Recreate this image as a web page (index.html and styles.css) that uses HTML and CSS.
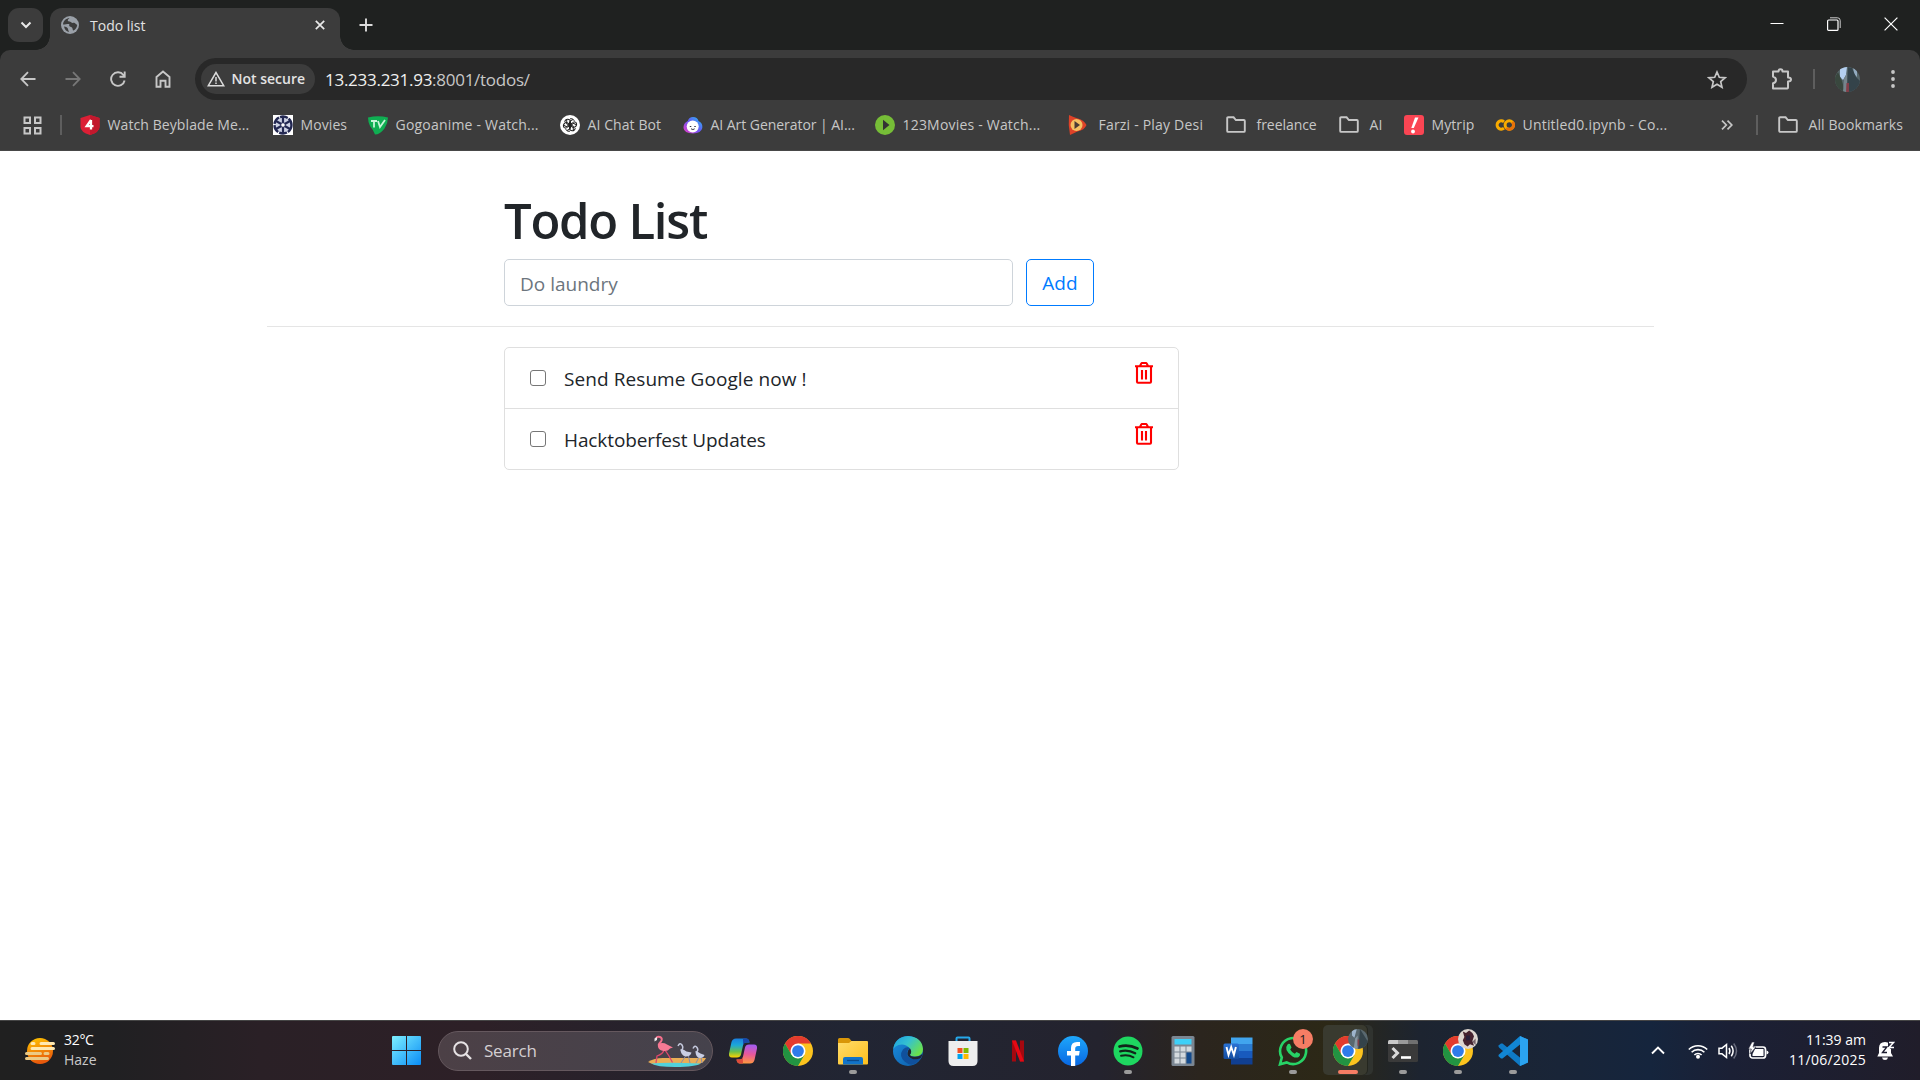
FILE: index.html
```html
<!DOCTYPE html>
<html lang="en">
<head>
<meta charset="utf-8">
<title>Todo list</title>
<link rel="stylesheet" href="styles.css">
</head>
<body>
<svg class="defs" width="0" height="0" aria-hidden="true">
  <defs>
    <linearGradient id="edgeA" x1="0" y1="0" x2="1" y2=".6"><stop offset="0" stop-color="#1b9de2"/><stop offset=".5" stop-color="#35c1d0"/><stop offset="1" stop-color="#6be24b"/></linearGradient>
    <linearGradient id="edgeB" x1="0" y1="0" x2="1" y2="1"><stop offset="0" stop-color="#1b8fe0"/><stop offset="1" stop-color="#0c59a4"/></linearGradient>
    <linearGradient id="winG" x1="0" y1="0" x2="1" y2="1"><stop offset="0" stop-color="#7df0ff"/><stop offset="1" stop-color="#0a8cf5"/></linearGradient>
    <linearGradient id="sunG" x1="0" y1="0" x2=".3" y2="1"><stop offset="0" stop-color="#ffc800"/><stop offset="1" stop-color="#e8590c"/></linearGradient>
    <linearGradient id="folderG" x1="0" y1="0" x2="1" y2="1"><stop offset="0" stop-color="#ffdc6b"/><stop offset="1" stop-color="#fdbf1c"/></linearGradient>
    <linearGradient id="fbG" x1="0" y1="0" x2="0" y2="1"><stop offset="0" stop-color="#1ea7fb"/><stop offset="1" stop-color="#0867e3"/></linearGradient>
    <linearGradient id="copA" x1="0" y1="0" x2="0" y2="1"><stop offset="0" stop-color="#1a7fe0"/><stop offset=".35" stop-color="#1ca8d8"/><stop offset=".7" stop-color="#6cc04a"/><stop offset="1" stop-color="#ffd400"/></linearGradient>
    <linearGradient id="copB" x1=".5" y1="0" x2=".4" y2="1"><stop offset="0" stop-color="#a45cf0"/><stop offset=".5" stop-color="#e8589a"/><stop offset="1" stop-color="#ff9a3c"/></linearGradient>
    <linearGradient id="artG" x1="1" y1="0" x2="0" y2="1"><stop offset="0" stop-color="#1fc8f5"/><stop offset=".5" stop-color="#6a55f5"/><stop offset="1" stop-color="#f33cc3"/></linearGradient>
    <linearGradient id="wordG" x1="0" y1="0" x2="0" y2="1"><stop offset="0" stop-color="#2a72d4"/><stop offset="1" stop-color="#134b9f"/></linearGradient>
    <clipPath id="round"><circle cx="12.5" cy="12.5" r="12.5"/></clipPath>
    <symbol id="chrome" viewBox="0 0 48 48">
      <circle cx="24" cy="24" r="24" fill="#fcc31e"/>
      <path d="M24 12h20.8A24 24 0 0 0 3.2 12L13.6 30Z" fill="#e33b2e"/>
      <path d="M3.2 12 13.6 30 24 36 34.4 30 24 48A24 24 0 0 1 3.2 12Z" fill="#229342"/>
      <circle cx="24" cy="24" r="12" fill="#fff"/><circle cx="24" cy="24" r="9.4" fill="#2f7bea"/>
    </symbol>
    <symbol id="folder" viewBox="0 0 20 20"><path d="M1.2 3.2V16q0 .9.9.9h15.8q.9 0 .9-.9V5.9q0-.9-.9-.9h-8L7.600 2.300H2.100q-.9 0-.9.9Z" fill="none" stroke="#c7c7c7" stroke-width="1.9"/></symbol>
    <symbol id="trash" viewBox="0 0 18 22"><path d="M0 4.300h18M2 4.300V19.800q0 1 1 1h12q1 0 1-1V4.300M5 4l1.200-2.400q.3-.6 1-.6h3.600q.7 0 1 .6L13 4M7 8v9.500M11 8v9.500" fill="none" stroke="#f00" stroke-width="2.100"/></symbol>
  </defs>
</svg>

<header class="browser">
  <div class="tabstrip">
    <div class="tabsearch"><svg width="12" height="8" viewBox="0 0 12 8"><path d="m1.500 1.500 4.500 4.500 4.500-4.500" fill="none" stroke="#e8e8e8" stroke-width="2"/></svg></div>
    <div class="tab">
      <svg width="18" height="18" viewBox="0 0 18 18"><circle cx="9" cy="9" r="9" fill="#9aa0a8"/><path d="M8.500 2c-1 1.500-1.700 1-1.700 2.600 0 1.300 2.600.7 3.400 1.700 1 1.300 2.200 0 3.500.7L16.200 9c-.3 3-2 4.800-3.700 5.600-1.200-.3-.5-2-1.500-3.100S7.500 11 8.300 9 4.500 8.700 2 8.500C2.200 5 5 2.300 8.500 2ZM3 10.500c2 .2 3.800 1 4 2.500s1 2 .8 2.900C5.500 15.500 3.500 13.500 3 10.500Z" fill="#3c3c3c"/></svg>
      <span class="t tab-title">Todo list</span>
      <svg class="tab-close" width="10" height="10" viewBox="0 0 10 10"><path d="m.8.8 8.400 8.400M9.200.8.800 9.200" stroke="#e8e8e8" stroke-width="1.700"/></svg>
    </div>
    <svg class="newtab" width="14" height="14" viewBox="0 0 14 14"><path d="M7 .5v13M.5 7h13" stroke="#dcdcdc" stroke-width="1.900"/></svg>
    <div class="winctl">
      <svg width="14" height="14" viewBox="0 0 14 14"><path d="M.5 6.500h13" stroke="#fff"/></svg>
      <svg width="14" height="14" viewBox="0 0 14 14"><path d="M3 .8h7.500q2.700 0 2.700 2.700V11" fill="none" stroke="#ccc"/><rect x=".6" y="3" width="10.400" height="10.400" rx="1" fill="none" stroke="#fff" stroke-width="1.200"/></svg>
      <svg width="14" height="14" viewBox="0 0 14 14"><path d="m.6.6 12.800 12.800M13.400.6.600 13.400" stroke="#fff" stroke-width="1.200"/></svg>
    </div>
  </div>

  <div class="toolbar">
    <nav class="navbtns">
      <svg width="16" height="16" viewBox="0 0 16 16"><path d="M15.500 8H1.500M8 1.200 1.300 8 8 14.800" fill="none" stroke="#c7c7c7" stroke-width="1.800"/></svg>
      <svg width="16" height="16" viewBox="0 0 16 16"><path d="M.5 8h14M8 1.200 14.700 8 8 14.800" fill="none" stroke="#777" stroke-width="1.800"/></svg>
      <svg width="16" height="16" viewBox="0 0 16 16"><path d="M14.600 9.500A6.800 6.800 0 1 1 13.400 4l1 1.300M14.700.500v5.300H9.500" fill="none" stroke="#c7c7c7" stroke-width="1.900"/></svg>
      <svg width="16" height="18" viewBox="0 0 16 18"><path d="M1.500 7 8 1.500 14.500 7v9.800h-4v-6h-5v6h-4Z" fill="none" stroke="#c7c7c7" stroke-width="1.900"/></svg>
    </nav>
    <div class="omnibox">
      <div class="chip">
        <svg width="18" height="16" viewBox="0 0 18 16"><path d="M9 1.500 1.300 14.700h15.400Z" fill="none" stroke="#dcdcdc" stroke-width="1.500"/><path d="M9 6v4.500M9 11.500V13" stroke="#dcdcdc" stroke-width="1.500"/></svg>
        <span class="t secure">Not secure</span>
      </div>
      <span class="t url">13.233.231.93<span class="path">:8001/todos/</span></span>
      <svg class="star" width="20" height="19" viewBox="0 0 20 19"><path d="m10 2 2.300 5.300 5.700.5-4.300 3.800 1.300 5.700-5-3-5 3 1.300-5.700L2 7.800l5.700-.5Z" fill="none" stroke="#c7c7c7" stroke-width="1.700"/></svg>
    </div>
    <svg class="puzzle" width="22" height="22" viewBox="0 0 22 22"><path d="M2 3.500h5.500q0-2.300 2-2.300t2 2.300H17v6q3 0 3 2t-3 2v6.300q0 .7-.7.700H2v-5.300q3-.6 3-3.200T2 8.600Z" fill="none" stroke="#c7c7c7" stroke-width="2" stroke-linejoin="round"/></svg>
    <i class="vsep"></i>
    <svg class="avatar" width="25" height="25" viewBox="0 0 25 25"><g clip-path="url(#round)"><path fill="#56666a" d="M0 0h25v25H0z"/><path d="M5 0h7l-1 8-3 5-3-3Z" fill="#b4cff0"/><path d="M18 0h4v10l-3-3Z" fill="#93abc0"/><path d="m13 0 4 1 4 9 4 4v11H12Z" fill="#34434a"/><path d="m0 10 3-5 4 9 3 11H0Z" fill="#39473e"/><path d="m9 12 3-6v19H8Z" fill="#75848c"/><path d="M11.500 16h2.500v9h-3z" fill="#833e48"/></g></svg>
    <svg class="dots" width="4" height="18" viewBox="0 0 4 18"><g fill="#c7c7c7"><circle cx="2" cy="2" r="1.900"/><circle cx="2" cy="9" r="1.900"/><circle cx="2" cy="16" r="1.900"/></g></svg>
  </div>

  <div class="bookmarks">
    <svg class="apps" width="19" height="19" viewBox="0 0 19 19"><g fill="none" stroke="#c7c7c7" stroke-width="2"><path d="M1.500 1.500h5.500v5.500H1.500zM12 1.500h5.500v5.500H12zM1.500 12h5.500v5.500H1.500zM12 12h5.500v5.500H12z"/></g></svg>
    <i class="vsep"></i>
    <div class="bm"><svg width="20" height="20" viewBox="0 0 20 20"><path d="m10 0 9.500 3v9q0 5-9.500 8Q.5 17 .5 12V3Z" fill="#dc1f35"/><path d="m10 0 9.500 3v9q0 5-9.500 8Z" fill="#c2182d"/><path d="M11 5v9.500M11 5l-4.300 6.200h6.800" fill="none" stroke="#fff" stroke-width="2.300"/></svg><span class="t">Watch Beyblade Me...</span></div>
    <div class="bm"><svg width="20" height="20" viewBox="0 0 20 20"><path fill="#fff" d="M0 0h20v20H0z"/><circle cx="10" cy="10" r="8.500" fill="#cdd2e4" stroke="#232852" stroke-width="2.400" stroke-dasharray="8 1.200"/><path d="M10 2v16M3 6l14 8M17 6 3 14" stroke="#232852" stroke-width="2.200"/><circle cx="10" cy="10" r="2.300" fill="#fff" stroke="#232852"/></svg><span class="t">Movies</span></div>
    <div class="bm"><svg width="20" height="20" viewBox="0 0 20 20"><path d="M0 2.500Q10 0 20 2.500q0 5.500-3.500 11Q12 19.500 7 19.500 5 14.500 2 11 0 7 0 2.500Z" fill="#0fae52"/><path d="M3 6h6M6 6v6.500M10 6l2 6L17 5" fill="none" stroke="#c7f5d8" stroke-width="1.800"/></svg><span class="t wide">Gogoanime - Watch...</span></div>
    <div class="bm"><svg width="20" height="20" viewBox="0 0 20 20"><circle cx="10" cy="10" r="10" fill="#fff"/><g fill="none" stroke="#222" stroke-width="1"><path id="knot" d="M10 3.800q3-.8 4 1.600.6 1.400-.3 3L9.500 11V6.500l3.500-2"/><use href="#knot" transform="rotate(60 10 10)"/><use href="#knot" transform="rotate(120 10 10)"/><use href="#knot" transform="rotate(180 10 10)"/><use href="#knot" transform="rotate(240 10 10)"/><use href="#knot" transform="rotate(300 10 10)"/></g></svg><span class="t">AI Chat Bot</span></div>
    <div class="bm"><svg width="20" height="20" viewBox="0 0 20 20"><path d="M10 2q4.500 0 5.500 4 4.500 2 3.800 7-1 5-9.300 5.500Q1 18 .5 13 .3 8 4.800 6 6 2 10 2Z" fill="url(#artG)"/><ellipse cx="9.700" cy="11.500" rx="6" ry="6" fill="#fff"/><path d="M6.800 11.500h1.500M11.300 11.500h1.500M8 13.800q2 1.500 3.700 0" fill="none" stroke="#334" stroke-width="1"/></svg><span class="t tight">AI Art Generator | AI...</span></div>
    <div class="bm"><svg width="20" height="20" viewBox="0 0 20 20"><circle cx="10" cy="10" r="10" fill="#76bd37"/><path d="M8 4.800 14.500 10 8 15.200Z" fill="#333"/></svg><span class="t wide">123Movies - Watch...</span></div>
    <div class="bm far"><svg width="20" height="20" viewBox="1 0 20 20"><path d="M2 0q4 2 8 3.200Q17 5 19.500 10q-2 5-9 6.500L3 20Q1 10 2 0Z" fill="#de4228"/><circle cx="9.500" cy="10" r="6" fill="#f6c061"/><path d="M7.500 6 13 10l-5.500 4Z" fill="#4b3a35"/></svg><span class="t wide">Farzi - Play Desi</span></div>
    <div class="bm dir"><svg width="20" height="20"><use href="#folder"/></svg><span class="t tight">freelance</span></div>
    <div class="bm dir"><svg width="20" height="20"><use href="#folder"/></svg><span class="t">AI</span></div>
    <div class="bm"><svg width="20" height="20" viewBox="0 0 20 20"><rect width="20" height="20" rx="3" fill="#fa4553"/><path d="M11 2.500h3.500L9.800 13H7.300Z" fill="#fff"/><circle cx="9" cy="16.500" r="1.900" fill="#fff"/></svg><span class="t">Mytrip</span></div>
    <div class="bm"><svg width="20" height="20" viewBox="0 0 20 20"><g fill="none" stroke-width="3"><path d="M9 6.800a4.200 4.200 0 1 0 0 6.400" stroke="#f9ab00"/><circle cx="14.300" cy="10" r="4.200" stroke="#f9ab00"/><path d="M17.300 7a4.200 4.200 0 0 1-6 6" stroke="#e8710a"/></g></svg><span class="t wide">Untitled0.ipynb - Co...</span></div>
    <svg class="more" width="12" height="10" viewBox="0 0 12 10"><path d="m1 .7 4.300 4.300L1 9.300M6.500.700 10.800 5 6.500 9.300" fill="none" stroke="#c7c7c7" stroke-width="1.700"/></svg>
    <i class="vsep"></i>
    <div class="bm dir"><svg width="20" height="20"><use href="#folder"/></svg><span class="t">All Bookmarks</span></div>
  </div>
</header>

<main class="page">
  <section class="head">
    <h1>Todo List</h1>
    <form class="addform">
      <div class="field">Do laundry</div>
      <button type="button" class="add">Add</button>
    </form>
  </section>
  <hr>
  <ul class="list">
    <li><input type="checkbox"><span class="t">Send Resume Google now !</span><svg width="18" height="22"><use href="#trash"/></svg></li>
    <li><input type="checkbox"><span class="t tight">Hacktoberfest Updates</span><svg width="18" height="22"><use href="#trash"/></svg></li>
  </ul>
</main>

<footer class="taskbar">
  <div class="weather">
    <svg width="30" height="28" viewBox="0 0 30 28"><circle cx="15" cy="14" r="13" fill="url(#sunG)"/><g stroke="#ffe9b0" stroke-width="3" stroke-linecap="round"><path d="M7 6.500h2M16 6.500h12.500M7 11.500h21.500"/><path d="M1.500 16.500h14M20 16.500h3M1.500 21.500h21" stroke="#ecca85"/></g></svg>
    <div class="wtext"><span class="t temp">32°C</span><span class="t haze">Haze</span></div>
  </div>
  <div class="approw">
    <div class="app"><svg width="29" height="29" viewBox="0 0 29 29"><path d="M1 0h13v14H0V1q0-1 1-1ZM15 0h13q1 0 1 1v13H15zM0 15h14v14H1q-1 0-1-1ZM15 15h14v13q0 1-1 1H15z" fill="url(#winG)"/></svg></div>
    <div class="search">
      <svg width="19" height="19" viewBox="0 0 19 19"><circle cx="8" cy="8" r="6.800" fill="none" stroke="#e6e2e4" stroke-width="2"/><path d="m13 13 5 5" stroke="#e6e2e4" stroke-width="2.400"/></svg>
      <span class="t searchtxt">Search</span>
      <svg class="birds" width="58" height="32" viewBox="0 0 58 32"><path d="M0 27q6-4 15-4h43q-2 5-9 6.500Q30 32 9 30 3 29 0 27Z" fill="#e9ae56"/><path d="M3 28.500q15-1.500 50 0-5 3.300-26 3.500-18 0-24-3.500Z" fill="#52d2dc"/><path d="M16 15q-1 4-7 6l-1 7M17 15l4 6 3.500 6.500" fill="none" stroke="#e0486c" stroke-width="1.300"/><path d="M8 4Q9 .8 12 2t1 4.500q-2 2-2.500 4" fill="none" stroke="#f5708c" stroke-width="2"/><path d="M10 9q5-2 9 .5l6 3-3 1q-2 3-6.500 2.500Q9 15 10 9Z" fill="#f77a94"/><path d="M6.500 3.500 9 2v3L6.500 6.500Z" fill="#eee"/><g fill="none" stroke="#c4c8dc" stroke-width="1.500"><path d="M30 11q2-4 4-1t-1 6M45 13.500q2-4 4-1t-1 5"/><path d="m38 19-1 3-4 6M40 19l2 9M51 22l-3 6M53 22l1 6" stroke="#8a8ca8" stroke-width="1"/></g><path d="M32.500 14q3.500 0 6 2.500l5 1q-1 4-5.500 4-5.500-1-5.500-7.500ZM47.500 16q2.500.5 5 2.500l4 1.500q-1 3.500-5 3-4-1-4-7Z" fill="#c9cee3"/></svg>
    </div>
    <div class="app"><svg width="30" height="30" viewBox="0 0 30 30"><path d="M8 2.500h10q3 0 3.500 4h-3.500q-2.500 0-3 3l-2 9q-.7 3-4 3H4q-3.500 0-3-4L3.500 6q1-3.500 4.500-3.500Z" fill="url(#copA)"/><path d="M15 2.500h3q3 0 3.500 4h-3.500q-2 0-2.800 2.500Z" fill="#1747ad"/><path d="M22 27.500H12q-3 0-3.500-4H12q2.500 0 3-3l2-9q.7-3 4-3h5q3.500 0 3 4L26.500 24q-1 3.500-4.500 3.500Z" fill="url(#copB)"/><path d="M15 27.500h-3q-3 0-3.500-4H12q2 0 2.800-2.500Z" fill="#df4a3b"/></svg></div>
    <div class="app"><svg width="30" height="30"><use href="#chrome"/></svg></div>
    <div class="app run"><svg width="30" height="30" viewBox="0 0 30 30"><path d="M0 9V3.500Q0 2 1.500 2H10q1 0 1.700.8L13.500 5H29v5Z" fill="#d99608"/><path d="M0 7h11l2.500-2H29q1 0 1 1v21.500q0 1-1 1H1q-1 0-1-1Z" fill="url(#folderG)"/><path d="M5 28.500V23q0-2 2-2h16q2 0 2 2v5.500Z" fill="#1173c8"/><path d="M9 24.500h12" stroke="#0a4a8c" stroke-width="1.300"/></svg></div>
    <div class="app"><svg width="30" height="30" viewBox="0 0 30 30"><circle cx="15" cy="15" r="15" fill="url(#edgeB)"/><path d="M.3 13Q2 1 15 0q14 1 15 13 0 7-7 7.500-5 0-6.200-1.500 2.500-3 .2-6.500Q12 7 5.500 9 1.500 10.500.3 13Z" fill="url(#edgeA)"/><path d="M17 12.500q-3-3-7 1-4.500 6 1.500 12 3 2.600 7 3.300 5.500-1 9.300-7-5 2.500-9.500.8-4.500-2-4.300-5.600 0-3 3-4.500Z" fill="#10509c"/><path d="M17 12.500q2.500 3.500-.2 6.500 1.300 2 5.200 1.700 5 0 7.500-3-.5 3-2 4.500-5 2-8.500.5-5-2-4.500-5.700 0-3 2.500-4.500Z" fill="#222430"/></svg></div>
    <div class="app"><svg width="30" height="30" viewBox="0 0 30 30"><path d="M8.500 6V2.500q0-1 1-1h11q1 0 1 1V6" fill="none" stroke="#26a8ea" stroke-width="2"/><path d="M.5 5h29v20q0 5-5 5h-19q-5 0-5-5Z" fill="#eee"/><path fill="#f25022" d="M9.500 12h5v5h-5z"/><path fill="#7fba00" d="M15.500 12h5v5h-5z"/><path fill="#00a4ef" d="M9.500 18h5v5h-5z"/><path fill="#ffb900" d="M15.500 18h5v5h-5z"/></svg></div>
    <div class="app"><svg width="30" height="30" viewBox="0 0 30 30"><path d="M9 4.500h4v21H9zM17 4.500h4v21h-4z" fill="#a5080f"/><path d="M9 4.500h4l8 21h-4Z" fill="#e50914"/></svg></div>
    <div class="app"><svg width="30" height="30" viewBox="0 0 30 30"><circle cx="15" cy="15" r="15" fill="url(#fbG)"/><path d="M13 30V19.500H9V15h4v-3q0-6 6-6h3v4h-2q-2.800 0-2.800 2.800V15h4.500l-.7 4.500h-3.800V30Z" fill="#fff"/></svg></div>
    <div class="app run"><svg width="30" height="30" viewBox="0 0 30 30"><circle cx="15" cy="15" r="14.500" fill="#1ed760"/><g fill="none" stroke="#11251a" stroke-linecap="round"><path d="M6.500 10.500q9-2.500 18 2" stroke-width="2.700"/><path d="M7.200 15.300q8-2 15 2" stroke-width="2.300"/><path d="M8 19.800q7-1.500 12.500 1.500" stroke-width="1.900"/></g></svg></div>
    <div class="app"><svg width="30" height="30" viewBox="0 0 30 30"><rect x="3.500" width="23" height="30" rx="1.500" fill="#7b8692"/><path d="M6.500 3h17v5.500h-17z" fill="#3dd0f8"/><g fill="#d4dade"><path d="M6.500 10.500h5v5h-5zM12.500 10.500h5v5h-5zM18.500 10.500h5v5h-5zM6.500 16.500h5v5h-5zM12.500 16.500h5v5h-5zM6.500 22.500h5v5h-5zM12.500 22.500h5v5h-5z"/></g><path d="M18.500 16.500h5v11h-5z" fill="#134a8c"/></svg></div>
    <div class="app"><svg width="30" height="30" viewBox="0 0 30 30"><path fill="#41a5ee" d="M8 1.500h21.500V8H8z"/><path fill="#2b7cd3" d="M8 8h21.500v7H8z"/><path fill="#185abd" d="M8 15h21.500v7H8z"/><path fill="#103f91" d="M8 22h21.500v6.500H8z"/><rect x=".5" y="7.500" width="15.500" height="15.500" rx="1.500" fill="url(#wordG)"/><path d="m3.500 11 2 8L8.200 11l2.700 8 2-8" fill="none" stroke="#fff" stroke-width="1.900"/></svg></div>
    <div class="app run"><svg width="30" height="30" viewBox="0 0 30 30"><path d="M2 28.300 3.800 21.500A13 13 0 1 1 8.700 26.400Z" fill="none" stroke="#27d366" stroke-width="2.600"/><path d="M9.500 8.500q1-1.300 2.500-.5l1.500 3.500-1.300 2q1.500 3 4.600 4.200l1.700-1.800 3.500 1.800q.5 2-1.300 3.200-2.500 1.600-6.200-.5-4.500-2.800-6-6.500-.9-3.200 1-5.400Z" fill="#27d366"/></svg><b class="badge">1</b></div>
    <div class="app run active"><svg width="30" height="30"><use href="#chrome"/></svg><svg class="profile" width="20" height="20" viewBox="0 0 25 25"><g clip-path="url(#round)"><path fill="#59686f" d="M0 0h25v25H0z"/><path d="M5 0h6l-3 11-3-3Z" fill="#9db4cc"/><path d="m15 0 10 16v9H13Z" fill="#34434a"/><path d="m9 12 3-4v17H7Z" fill="#8795a0"/><path d="M12 13h2v8h-2z" fill="#833e48"/></g></svg></div>
    <div class="app run"><svg width="30" height="30" viewBox="0 0 30 30"><rect y="4" width="30" height="22" rx="1.500" fill="#3a3a3a"/><path d="M1.500 4H10v4H0V5.500Q0 4 1.500 4Z" fill="#c8c8c8"/><path d="M10 4h10v4H10z" fill="#9a9a9a"/><path d="M20 4h8.500Q30 4 30 5.500V8H20z" fill="#707070"/><path d="m4.500 12 5 5-5 5" fill="none" stroke="#d8d8d8" stroke-width="3"/><path d="M13 21.500h10" stroke="#fff" stroke-width="2.600"/></svg></div>
    <div class="app run"><svg width="30" height="30"><use href="#chrome"/></svg><svg class="profile" width="20" height="20" viewBox="0 0 25 25"><g clip-path="url(#round)"><path fill="#ddd6cf" d="M0 0h25v25H0z"/><path d="m6 3 4 2 4-3 4 3 2 4-2 6 2 6-5-2-3 3-4-3-2-5 2-4Z" fill="#46232f"/><path d="M10 8h5v6h-5z" fill="#28203b"/><path d="m18 16 4-4v8z" fill="#77636a"/></g></svg></div>
    <div class="app run"><svg width="30" height="30" viewBox="0 0 30 30"><path d="M22 0 30 3.500v23L22 30 1 11.500l-.8-1.700L3 7.500h1.500L22 21.500Z" fill="#0f7ac5"/><path d="M22 8.500 4.500 22.500H3L.3 20 1 18.500 22 0Z" fill="#1186d4"/><path d="m22 0 8 3.500v23L22 30Z" fill="#2ba3f0"/></svg></div>
  </div>
  <div class="tray">
    <svg class="up" width="14" height="9" viewBox="0 0 14 9"><path d="m1 7.500 6-6 6 6" fill="none" stroke="#fff" stroke-width="1.900"/></svg>
    <svg class="wifi" width="20" height="16" viewBox="0 0 20 16"><g fill="none" stroke="#fff" stroke-width="1.600"><path d="M.8 6.500a13 13 0 0 1 18.400 0M3.600 9.300a9 9 0 0 1 12.800 0M6.400 12a5 5 0 0 1 7.200 0"/></g><circle cx="10" cy="13.800" r="2" fill="#fff"/></svg>
    <svg class="vol" width="20" height="18" viewBox="0 0 20 18"><g fill="none" stroke="#fff" stroke-width="1.500"><path d="M1 6.200v5.600h3l4.500 3.700v-13L4 6.200ZM11 6q1.800 3 0 6M13.300 3.800q3.600 5.200 0 10.400"/><path d="M15.700 1.500q5.600 7.500 0 15" stroke="#686b7c"/></g></svg>
    <svg class="bat" width="21" height="18" viewBox="0 0 21 18"><rect x="2" y="5" width="15.500" height="11" rx="2.500" fill="none" stroke="#fff" stroke-width="1.700"/><path d="M7 7h8.500v7H4.500v-2Z" fill="#fff"/><path d="M18.500 8.500q2 .3 2 2t-2 2Z" fill="#fff"/><path d="M4 0 .3 7h3L2 12l6-7H5l1.500-5Z" fill="#fff" stroke="#1c1f33" stroke-width=".6"/></svg>
    <div class="clock"><span class="t">11:39 am</span><span class="t date">11/06/2025</span></div>
    <svg class="bell" width="18" height="20" viewBox="0 0 18 20"><path d="M8 1q6 0 6 7v4l2 3.500H.300L2 12V7q0-6 6-6ZM5 16.500h6q-.5 2.500-3 2.500t-3-2.500Z" fill="#fff"/><path d="M5.500 6h4.300L5.500 11.500h4.500" fill="none" stroke="#1d1d30" stroke-width="1.400"/><path d="M11 0h7v8h-4l-3-2Z" fill="#1d1d30"/><path d="M12 1.500h4.500L12 6.500h5" fill="none" stroke="#fff" stroke-width="1.500"/></svg>
  </div>
</footer>
</body>
</html>
```
FILE: styles.css
```css
* { box-sizing: border-box; }
body {
  margin: 0;
  width: 1920px;
  height: 1080px;
  display: flex;
  flex-direction: column;
  overflow: hidden;
  background: #fff;
  font-family: "Open Sans", "Noto Sans", sans-serif;
}
svg { display: block; flex: none; }
.defs { position: absolute; }
.t { white-space: nowrap; }

/* Browser chrome */
.browser { height: 151px; flex: none; background: #1f2120; color: #c7c7c7; }
.tabstrip { height: 50px; display: flex; align-items: flex-start; padding: 8px 0 0 8px; }
.tabsearch { width: 35px; height: 34px; border-radius: 11px; background: #3c3c3c; display: flex; align-items: center; justify-content: center; }
.tab {
  position: relative;
  width: 290px; height: 42px; margin-left: 7px; padding: 0 15px 8px 11px;
  display: flex; align-items: center;
  background: #3c3c3c; border-radius: 12px 12px 0 0;
}
.tab::before, .tab::after { content: ""; position: absolute; bottom: 0; width: 14px; height: 14px; }
.tab::before { right: 100%; background: radial-gradient(circle at 0 0, transparent 13.5px, #3c3c3c 14px); }
.tab::after { left: 100%; background: radial-gradient(circle at 100% 0, transparent 13.5px, #3c3c3c 14px); }
.tab-title { margin-left: 11px; font-size: 14px; color: #e3e3e3; }
.tab-close { margin-left: auto; }
.newtab { margin: 10px 0 0 18.5px; }
.winctl { display: flex; gap: 43px; margin: 9px 22px 0 auto; }

.toolbar { height: 58px; background: #3c3c3c; border-radius: 10px 10px 0 0; display: flex; align-items: center; }
.navbtns { display: flex; align-items: center; gap: 29px; margin-left: 20px; width: 175px; }
.omnibox { width: 1552px; height: 42px; border-radius: 21px; background: #282828; display: flex; align-items: center; padding: 0 20px 0 6px; }
.chip { width: 114px; height: 30px; border-radius: 15px; background: #3c3c3c; display: flex; align-items: center; padding-left: 6px; }
.secure { margin-left: 6.5px; padding-bottom: 2px; font-size: 14px; font-weight: 600; color: #e3e3e3; }
.url { margin-left: 10px; font-size: 17px; letter-spacing: -.27px; color: #f0f0f0; }
.path { color: #c7c7c7; }
.star { margin-left: auto; }
.puzzle { margin-left: 24px; }
.vsep { width: 2px; height: 20px; background: #5e5e5e; flex: none; }
.toolbar .vsep { margin-left: 20px; }
.avatar { margin-left: 20px; }
.dots { margin-left: 30.5px; }

.bookmarks {
  height: 43px; background: #3c3c3c; padding-bottom: 9px;
  box-shadow: inset 0 -1px #484848;
  display: grid; align-items: center;
  grid-template-columns: 60px 20px 193px 95px 192px 123px 192px 193px 158px 113px 65px 91px 226px 35px 22px 142px;
}
.apps { margin-left: 22.5px; }
.bm { display: flex; align-items: center; gap: 7.5px; }
.bm.dir { gap: 10.5px; }
.bm.far { gap: 10.5px; }
.bm .t { font-size: 14px; padding-bottom: 2px; letter-spacing: .09px; }
.bm .wide { letter-spacing: .2px; }
.bm .tight { letter-spacing: -.05px; }

/* Todo page */
.page { flex: 1; min-height: 0; }
.head { width: 676px; margin: 39px 0 0 504px; }
h1 { margin: 0 0 9px; font-size: 49px; line-height: 60px; font-weight: 600; letter-spacing: -1.25px; color: #212529; }
.addform { display: flex; gap: 13px; }
.field { width: 509px; height: 47px; border: 1px solid #ced4da; border-radius: 5px; padding: 3px 0 0 15px; display: flex; align-items: center; font-size: 19px; color: #6c757d; }
.add { width: 68px; height: 47px; border: 1px solid #007bff; border-radius: 5px; background: #fff; color: #007bff; font: 19px "Open Sans", sans-serif; padding: 0 0 0 0; }
hr { width: 1387px; height: 1px; border: 0; background: #e5e5e5; margin: 20px 0 20px 267px; }
.list { width: 675px; margin: 0 0 0 504px; padding: 0; list-style: none; border: 1px solid #dfdfdf; border-radius: 5px; color: #212529; }
.list li { height: 60px; display: flex; align-items: center; padding: 0 25px; font-size: 19px; }
.list li + li { height: 61px; border-top: 1px solid #dfdfdf; }
.list .t { padding-top: 1px; letter-spacing: .08px; }
.list .tight { letter-spacing: -.1px; }
.list input { appearance: none; width: 16px; height: 16px; margin: 0 18px 0 0; border: 1px solid #767676; border-radius: 3px; background: #fff; }
.list svg { margin: 0 0 11px auto; }

/* Taskbar */
.taskbar {
  height: 60px; flex: none; display: flex; align-items: center; border-top: 1px solid #454545;
  background: linear-gradient(90deg, #202020 0, #202022 110px, #2a2026 260px, #2d2027 480px, #24232e 700px, #212533 850px, #24232e 1100px, #2b251e 1200px, #2c2816 1330px, #1d2430 1420px, #192538 1560px, #15253d 1650px, #1b2035 1730px, #201d2a 1920px);
  color: #fff;
}
.weather { display: flex; align-items: center; width: 379px; padding-left: 25px; }
.wtext { display: flex; flex-direction: column; margin-left: 9px; padding-bottom: 2px; line-height: 20px; font-size: 14px; }
.temp { letter-spacing: -.3px; }
.haze { color: #c9c9c9; }
.approw { display: flex; align-items: center; }
.app { position: relative; width: 55px; height: 59px; display: flex; align-items: center; justify-content: center; }
.search { width: 275px; height: 40px; margin: 0 2px 0 4px; border-radius: 20px; border: 1px solid #65585e; background: linear-gradient(90deg, #4c4046, #45424c); display: flex; align-items: center; padding: 0 6px 0 14px; }
.searchtxt { margin-left: 12px; font-size: 17px; letter-spacing: -.2px; color: #d4cfd2; }
.birds { margin-left: auto; }
.run::after { content: ""; position: absolute; left: 23.5px; bottom: 6px; width: 8px; height: 4px; border-radius: 2px; background: #9b9b9b; }
.active { z-index: 0; }
.active::before { content: ""; position: absolute; z-index: -1; left: 3px; top: 4px; width: 44px; height: 50px; border-radius: 5px; background: #393a2f; box-shadow: 1px 0 #24261f, 6px 0 #30332f; }
.active::after { left: 17.5px; width: 20px; background: #f67d64; }
.badge { position: absolute; left: 28px; top: 8px; width: 20px; height: 20px; border-radius: 50%; background: #f67d64; color: #202020; font-size: 13px; font-weight: 400; line-height: 20px; text-align: center; }
.profile { position: absolute; left: 28px; top: 8px; }
.tray { display: flex; align-items: center; margin-left: auto; padding-right: 25px; }
.wifi { margin-left: 23px; }
.vol { margin-left: 10px; }
.bat { margin-left: 10px; }
.clock { width: 97px; display: flex; flex-direction: column; align-items: flex-end; padding-bottom: 2px; line-height: 20px; font-size: 14px; }
.date { letter-spacing: .26px; }
.bell { margin-left: 11px; }
```
